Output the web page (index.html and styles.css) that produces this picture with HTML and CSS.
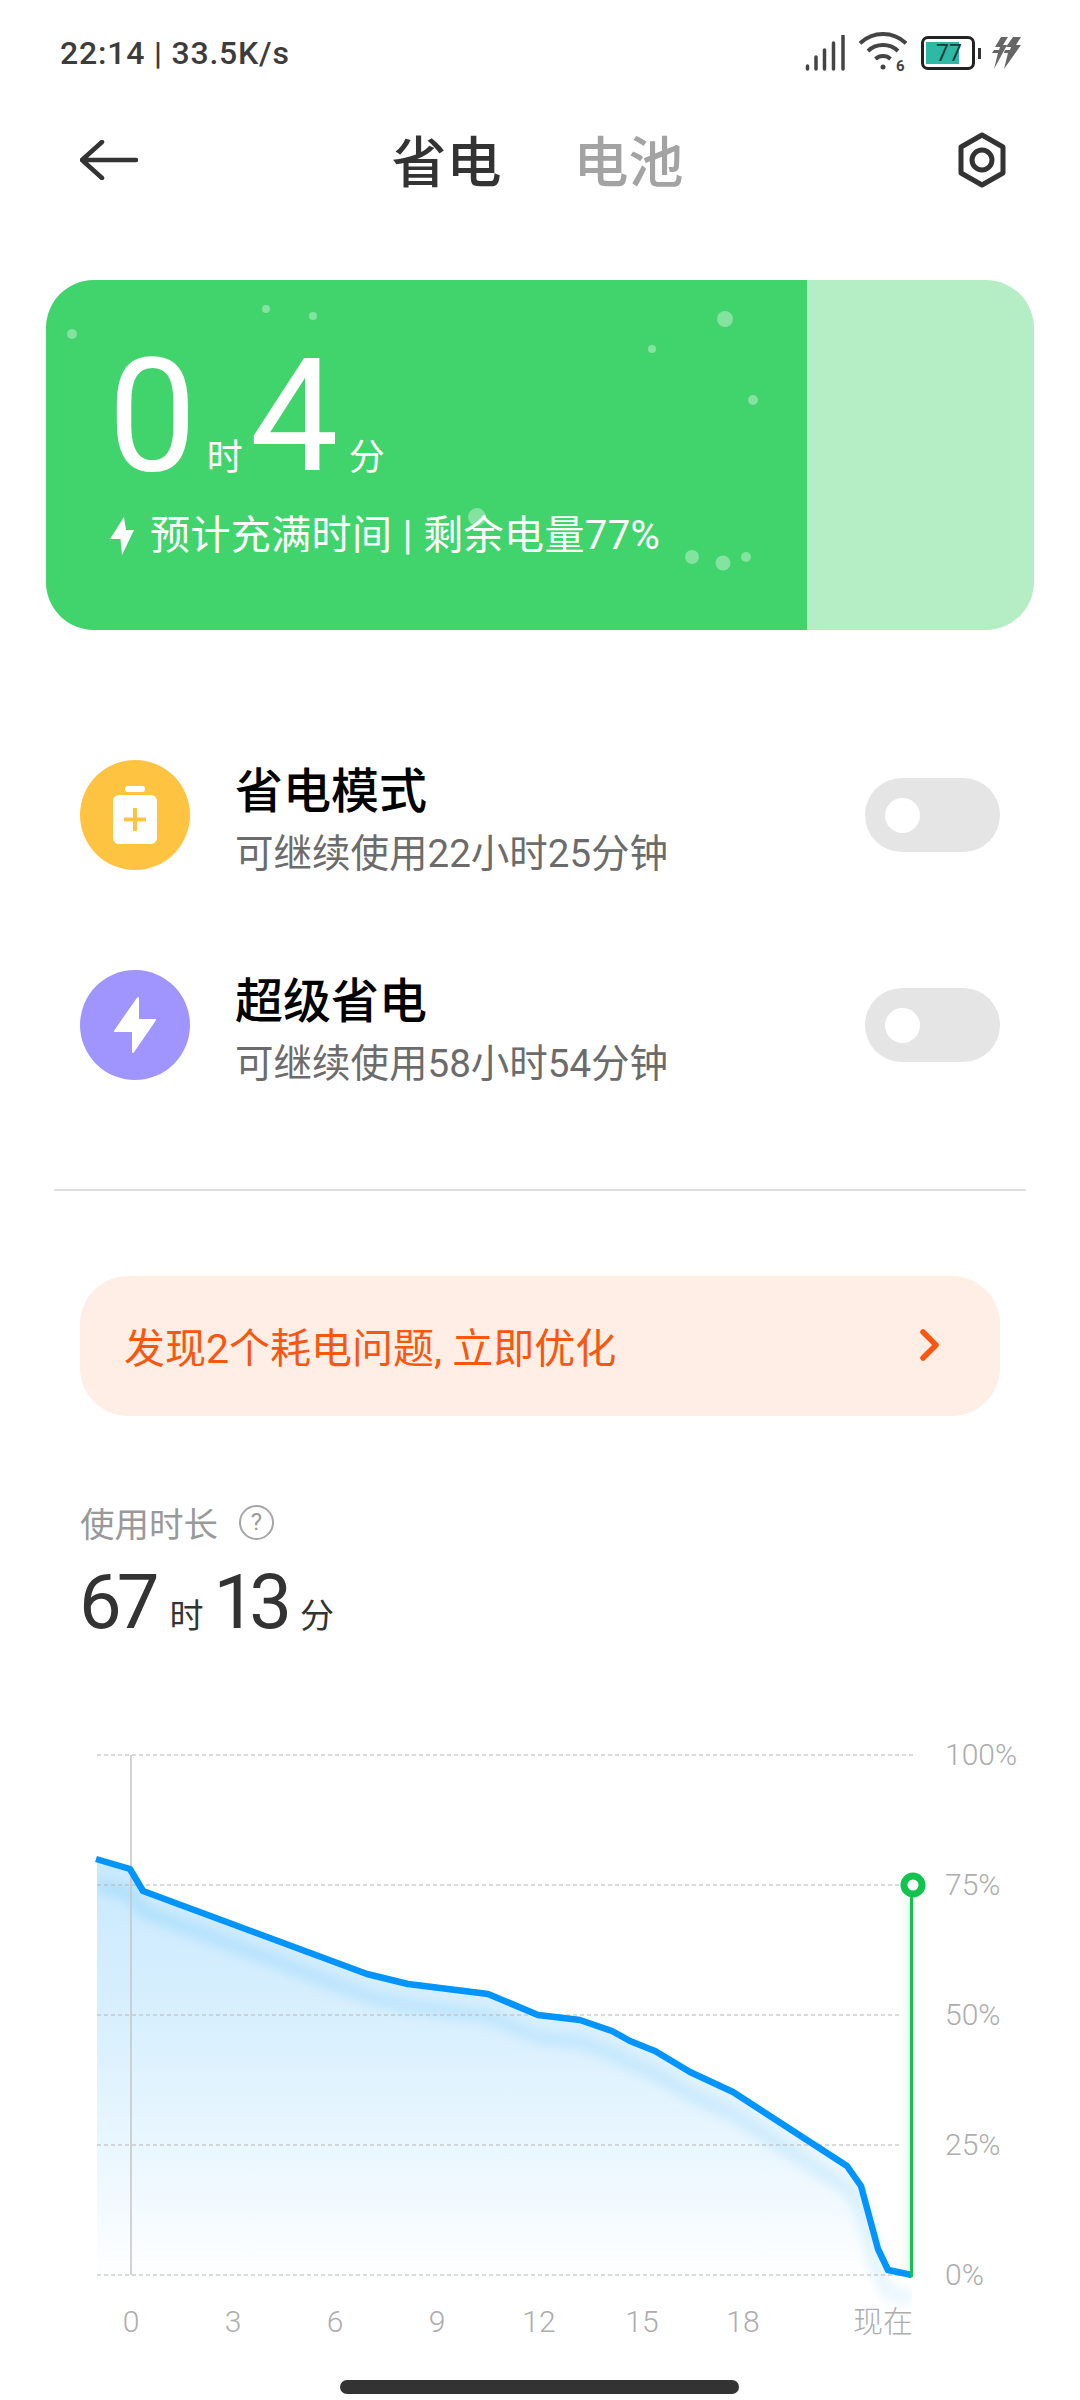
FILE: index.html
```html
<!DOCTYPE html>
<html>
	<head>
		<meta charset="UTF-8">
		<title>省电</title>
		<link rel="stylesheet" href="styles.css">
	</head>
	<body>
		<div class="page">

			<div class="status">
				<div class="status-text">22:14 | 33.5K/s</div>
				<div class="status-icons">
					<svg class="ico-signal" width="40" height="36" viewBox="0 0 40 36">
						<path d="M2.5 31v3M11 22v12M19.5 15v19M28.5 8v26M38 1v33" />
					</svg>
					<svg class="ico-wifi" width="48" height="44" viewBox="0 -3 48 44">
						<path d="M1 9.3A33 33 0 0 1 47 9.3M9 17A22 22 0 0 1 39 17M16.5 25A11 11 0 0 1 31.5 25" />
						<circle cx="24" cy="33" r="2.5" />
						<text x="37" y="37">6</text>
					</svg>
					<div class="battery">
						<div class="battery-box">
							<div class="battery-fill"></div>
							<span>77</span>
						</div>
						<div class="battery-tip"></div>
					</div>
					<svg class="ico-bolts" width="30" height="32" viewBox="0 0 30 32">
						<path d="M9 0h7L11 8h4L2 32l4-16H0l2-3h5l1-3H3z" />
						<path d="M21 0h8l-5 8h5L12 32l4-16h-4l1-3h5l1-3h-5z" />
					</svg>
				</div>
			</div>

			<div class="header">
				<svg class="back" width="58" height="40" viewBox="0 0 58 40">
					<path d="M22 2L2 20l20 18M2 20h54" />
				</svg>
				<div class="tabs">
					<div class="tab active">省电</div>
					<div class="tab">电池</div>
				</div>
				<svg class="gear" width="50" height="56" viewBox="0 0 50 56">
					<path d="M25 3l21 12v26L25 53 4 41V15z" />
					<circle cx="25" cy="28" r="10" />
				</svg>
			</div>

			<div class="charge-card">
				<div class="charge-fill">
					<svg class="bubbles" width="762" height="350" viewBox="0 0 762 350">
						<circle cx="26" cy="54" r="5" />
						<circle cx="220" cy="29" r="4" />
						<circle cx="267" cy="36" r="4" />
						<circle cx="679" cy="39" r="8" />
						<circle cx="606" cy="69" r="4" />
						<circle cx="707" cy="120" r="5" />
						<circle cx="431" cy="237" r="9" />
						<circle cx="646" cy="277" r="7" />
						<circle cx="677" cy="283" r="7.5" />
						<circle cx="700" cy="277" r="5" />
					</svg>
					<div class="charge-time">
						<span class="big">0</span><span class="unit">时</span><span class="big">4</span><span class="unit">分</span>
					</div>
					<div class="charge-sub">
						<svg width="24" height="38" viewBox="0 0 24 38">
							<path d="M14 0L0 22h10.5L12 38 24 13h-8z" />
						</svg>
						<span>预计充满时间 | 剩余电量77%</span>
					</div>
				</div>
			</div>

			<div class="mode-row first">
				<div class="mode-icon yellow">
					<svg width="44" height="58" viewBox="0 0 44 58">
						<rect x="12" y="0" width="20" height="6" rx="3" fill="#fff" />
						<rect x="0" y="9" width="44" height="49" rx="6" fill="#fff" />
						<path d="M22 22v23M11 33.5h22" stroke="#ffc342" stroke-width="4" />
					</svg>
				</div>
				<div class="mode-text">
					<div class="mode-title">省电模式</div>
					<div class="mode-sub">可继续使用22小时25分钟</div>
				</div>
				<div class="switch"><div class="knob"></div></div>
			</div>

			<div class="mode-row">
				<div class="mode-icon purple">
					<svg width="44" height="58" viewBox="0 0 44 58">
						<path d="M25 2L2 35h18v21L42 24H25z" fill="#fff" stroke="#fff" stroke-width="2" stroke-linejoin="round" />
					</svg>
				</div>
				<div class="mode-text">
					<div class="mode-title">超级省电</div>
					<div class="mode-sub">可继续使用58小时54分钟</div>
				</div>
				<div class="switch"><div class="knob"></div></div>
			</div>

			<div class="line"></div>

			<div class="banner">
				<span>发现2个耗电问题, 立即优化</span>
				<svg width="20" height="32" viewBox="0 0 20 32">
					<path d="M3 3l13 13L3 29" />
				</svg>
			</div>

			<div class="usage">
				<div class="usage-label">
					<span>使用时长</span>
					<div class="help">?</div>
				</div>
				<div class="usage-time">
					<span class="num">67</span><span class="small">时</span><span class="num tight">13</span><span class="small">分</span>
				</div>
			</div>

			<!-- viewBox keeps the page's own y values, easier to read off the chart -->
			<svg class="chart" width="1080" height="640" viewBox="0 1716 1080 640">
				<defs>
					<linearGradient id="areaFill" gradientUnits="userSpaceOnUse" x1="0" y1="1860" x2="0" y2="2285">
						<stop offset="0" stop-color="#c9e9fe" />
						<stop offset="0.4" stop-color="#d9f0fe" />
						<stop offset="0.7" stop-color="#ebf7fe" />
						<stop offset="1" stop-color="#ffffff" />
					</linearGradient>
					<linearGradient id="bandFill" gradientUnits="userSpaceOnUse" x1="0" y1="1900" x2="0" y2="2310">
						<stop offset="0" stop-color="#b4e1fd" />
						<stop offset="0.6" stop-color="#d3edfd" />
						<stop offset="1" stop-color="#eef8fe" />
					</linearGradient>
					<linearGradient id="greenGlow" x1="0" y1="0" x2="1" y2="0">
						<stop offset="0" stop-color="#ffffff" />
						<stop offset="1" stop-color="#e8f8ee" />
					</linearGradient>
					<filter id="soft" x="-5%" y="-5%" width="110%" height="110%">
						<feGaussianBlur stdDeviation="5" />
					</filter>
					<clipPath id="chartArea">
						<rect x="97" y="1750" width="815" height="570" />
					</clipPath>
				</defs>

				<path fill="url(#areaFill)" d="M97 1860L130 1870 143 1892 170 1902 367 1975 408 1985 488 1995 538 2016 580 2021 612 2032 630 2042 655 2052 690 2073 733 2093 847 2167 861 2187 868 2213 878 2250 888 2271 912 2276V2285H97z" />
				<g clip-path="url(#chartArea)">
					<path class="band" filter="url(#soft)" d="M97 1885L130 1895 143 1912 170 1922 367 1997 408 2007 488 2017 538 2038 580 2043 612 2054 630 2064 655 2074 690 2095 733 2115 847 2189 861 2209 868 2235 878 2272 888 2293 912 2300" />
				</g>

				<path class="grid" d="M97 1756H914M97 1886H900M97 2016H914M97 2146H914M97 2276H914" />
				<path class="mark" d="M131 1756V2276" />
				<rect x="900" y="1900" width="10" height="376" fill="url(#greenGlow)" />
				<path class="level" d="M96 1860L130 1870 143 1892 170 1902 367 1975 408 1985 488 1995 538 2016 580 2021 612 2032 630 2042 655 2052 690 2073 733 2093 847 2167 861 2187 868 2213 878 2250 888 2271 912 2276" />
				<path class="now" d="M911.5 1895V2278" />
				<circle class="now-dot" cx="913" cy="1886" r="9" />

				<text class="tick" x="945" y="1766">100%</text>
				<text class="tick" x="945" y="1896">75%</text>
				<text class="tick" x="945" y="2026">50%</text>
				<text class="tick" x="945" y="2156">25%</text>
				<text class="tick" x="945" y="2286">0%</text>

				<text class="tick mid" x="131" y="2333">0</text>
				<text class="tick mid" x="233" y="2333">3</text>
				<text class="tick mid" x="335" y="2333">6</text>
				<text class="tick mid" x="437" y="2333">9</text>
				<text class="tick mid" x="539" y="2333">12</text>
				<text class="tick mid" x="642" y="2333">15</text>
				<text class="tick mid" x="743" y="2333">18</text>
				<text class="tick end" x="913" y="2333">现在</text>
			</svg>

			<div class="home-bar"></div>
		</div>
	</body>
</html>
```

FILE: styles.css
```css
*{
	box-sizing: border-box;
}
html,body{
	margin: 0;
	padding: 0;
	background-color: #fff;
}
.page{
	width: 1080px;
	height: 2400px;
	overflow: hidden;
	font-family: Roboto, "Noto Sans CJK SC", sans-serif;
	color: #333;
}
svg{
	display: block;
}

/* status bar */
.status{
	height: 40px;
	margin-top: 33px;
	padding: 0 58px 0 60px;
	display: flex;
	justify-content: space-between;
	align-items: center;
}
.status-text{
	font-size: 32px;
	line-height: 40px;
	font-weight: 500;
	letter-spacing: 0.8px;
	color: #3c3c3c;
}
.status-icons{
	display: flex;
	align-items: center;
}
.ico-signal path{
	fill: none;
	stroke: #444;
	stroke-width: 3.5;
	stroke-linecap: round;
}
.ico-wifi{
	margin-left: 14px;
}
.ico-wifi path{
	fill: none;
	stroke: #444;
	stroke-width: 4;
}
.ico-wifi circle{
	fill: #444;
}
.ico-wifi text{
	font-size: 15px;
	font-weight: 700;
	fill: #444;
}
.battery{
	margin-left: 14px;
	display: flex;
	align-items: center;
}
.battery-box{
	width: 54px;
	height: 34px;
	border: 3px solid #222;
	border-radius: 7px;
	padding: 3px 0 0 2px;
	position: relative;
}
.battery-fill{
	width: 33px;
	height: 22px;
	background-color: #2db9a5;
}
.battery-box span{
	position: absolute;
	left: 12px;
	top: 3px;
	font-size: 23px;
	line-height: 23px;
	color: #173c3a;
}
.battery-tip{
	width: 3px;
	height: 11px;
	margin-left: 3px;
	background-color: #333;
}
.ico-bolts{
	margin-left: 11px;
}
.ico-bolts path{
	fill: #666;
}

/* title bar */
.header{
	height: 60px;
	margin-top: 57px;
	padding: 0 73px 0 80px;
	display: flex;
	justify-content: space-between;
	align-items: center;
}
.back path{
	fill: none;
	stroke: #333;
	stroke-width: 4.5;
	stroke-linecap: round;
	stroke-linejoin: round;
}
.gear path,.gear circle{
	fill: none;
	stroke: #333;
	stroke-width: 5;
	stroke-linejoin: round;
}
.tabs{
	display: flex;
	gap: 72px;
	margin: 6px 20px 0 0;
}
.tab{
	font-size: 55px;
	line-height: 60px;
	font-weight: 500;
	color: #a3a3a3;
}
.tab.active{
	color: #333;
}

/* charge card */
.charge-card{
	width: 988px;
	height: 350px;
	margin: 90px 0 0 46px;
	background-color: #b5eec5;
	border-radius: 48px;
	overflow: hidden;
}
.charge-fill{
	width: 761px;
	height: 350px;
	padding: 71px 0 0 62px;
	background-color: #42d46c;
	color: #fff;
	position: relative;
}
.bubbles{
	position: absolute;
	left: 0;
	top: 0;
}
.bubbles circle{
	fill: #fff;
	opacity: 0.35;
}
.charge-time{
	display: flex;
	align-items: baseline;
	height: 130px;
	line-height: 130px;
	position: relative;
}
.charge-time .big{
	font-size: 158px;
	font-weight: 400;
}
.charge-time .unit{
	font-size: 36px;
	margin: 0 7px 0 10px;
}
.charge-sub{
	margin: 30px 0 0 2px;
	display: flex;
	align-items: center;
	gap: 16px;
	font-size: 40px;
	line-height: 50px;
	letter-spacing: 0.4px;
	position: relative;
}
.charge-sub path{
	fill: #fff;
}

/* save modes */
.mode-row{
	height: 110px;
	margin: 100px 80px 0 80px;
	display: flex;
	align-items: center;
}
.mode-row.first{
	margin-top: 130px;
}
.mode-icon{
	width: 110px;
	height: 110px;
	border-radius: 50%;
	display: flex;
	align-items: center;
	justify-content: center;
}
.yellow{
	background-color: #ffc342;
}
.purple{
	background-color: #a094ff;
}
.mode-text{
	flex: 1;
	margin-left: 45px;
	padding-top: 9px;
}
.mode-title{
	font-size: 48px;
	line-height: 62px;
	font-weight: 500;
	color: #000;
}
.mode-sub{
	margin-top: 7px;
	font-size: 38.5px;
	line-height: 48px;
	color: #6b6b6b;
}
.switch{
	width: 135px;
	height: 74px;
	padding: 20px;
	border-radius: 37px;
	background-color: #e5e5e5;
}
.knob{
	width: 35px;
	height: 35px;
	border-radius: 50%;
	background-color: #fff;
}

.line{
	height: 2px;
	margin: 109px 54px 0;
	background-color: #dedede;
}

/* optimise banner */
.banner{
	height: 140px;
	margin: 85px 80px 0 80px;
	padding: 0 60px 2px 44px;
	border-radius: 48px;
	background-color: #ffeee6;
	display: flex;
	justify-content: space-between;
	align-items: center;
	font-size: 41px;
	color: #f9560f;
}
.banner path{
	fill: none;
	stroke: #f9560f;
	stroke-width: 5.5;
	stroke-linecap: round;
	stroke-linejoin: round;
}

/* usage */
.usage{
	margin: 86px 0 0 79px;
}
.usage-label{
	display: flex;
	align-items: center;
	gap: 21px;
	height: 40px;
	padding-left: 1px;
	font-size: 34.5px;
	color: #999;
}
.help{
	width: 35px;
	height: 35px;
	border: 2px solid #a6a6a6;
	border-radius: 50%;
	font-size: 24px;
	line-height: 31px;
	text-align: center;
}
.usage-time{
	display: flex;
	align-items: baseline;
	height: 80px;
	line-height: 80px;
	margin-top: 20px;
}
.usage-time .num{
	font-size: 76px;
	letter-spacing: -5px;
}
.usage-time .num.tight{
	letter-spacing: -7px;
}
.usage-time .small{
	font-size: 34px;
	margin: 0 10px 0 15px;
}

/* chart */
.chart{
	margin-top: 73px;
}
.grid{
	fill: none;
	stroke: #b5b5b5;
	stroke-width: 1;
	stroke-dasharray: 4 3;
}
.mark{
	fill: none;
	stroke: #c4c4c4;
	stroke-width: 1.5;
}
.band{
	fill: none;
	stroke: url(#bandFill);
	stroke-width: 16;
}
.level{
	fill: none;
	stroke: #0094ff;
	stroke-width: 6.5;
	stroke-linejoin: round;
}
.now{
	fill: none;
	stroke: #10c44d;
	stroke-width: 3;
}
.now-dot{
	fill: #fff;
	stroke: #10c44d;
	stroke-width: 7;
}
.tick{
	font-size: 30px;
	font-weight: 300;
	fill: #adadad;
}
.mid{
	text-anchor: middle;
}
.end{
	text-anchor: end;
}

.home-bar{
	width: 399px;
	height: 14px;
	margin: 25px 0 0 340px;
	border-radius: 7px;
	background-color: #333;
}
```
